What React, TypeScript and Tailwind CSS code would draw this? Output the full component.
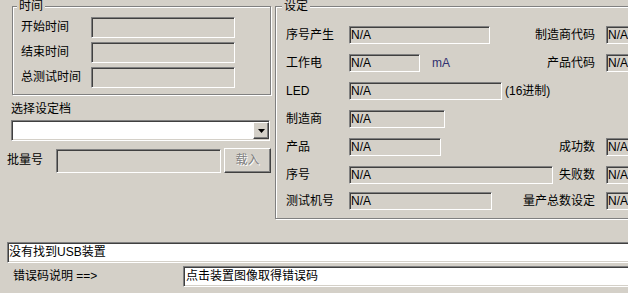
const sunken =
  'border border-t-[#808080] border-l-[#808080] border-r-white border-b-white shadow-[inset_1px_1px_0_#404040,inset_-1px_-1px_0_#d4d0c8]';
const raised =
  'border border-t-white border-l-white border-r-[#404040] border-b-[#404040] shadow-[inset_-1px_-1px_0_#808080,inset_1px_1px_0_#d4d0c8]';

function Group({ title, titleClass, className, children }: { title: string; titleClass: string; className: string; children: React.ReactNode }) {
  return (
    <div className={`relative border border-[#808080] shadow-[inset_1px_1px_0_#fff,1px_1px_0_#fff] ${className}`}>
      <span className={`absolute -top-[7px] bg-[#d4d0c8] px-[2px] leading-[13px] ${titleClass}`}>{title}</span>
      {children}
    </div>
  );
}

function Field({ className, value }: { className: string; value?: string }) {
  return (
    <div className={`${sunken} flex items-center pl-[1px] shrink-0 overflow-hidden whitespace-nowrap ${className}`}>
      {value}
    </div>
  );
}

type Row = { label: string; w: string; mt: string; suffix?: string; suffixCls?: string; right?: string };

const rows: Row[] = [
  { label: '序号产生', w: 'w-[141px]', mt: 'mt-0', right: '制造商代码' },
  { label: '工作电', w: 'w-[71px]', mt: 'mt-[10px]', suffix: 'mA', suffixCls: 'ml-[12px] text-[#303070]', right: '产品代码' },
  { label: 'LED', w: 'w-[153px]', mt: 'mt-[10px]', suffix: '(16进制)', suffixCls: 'ml-[3px]' },
  { label: '制造商', w: 'w-[96px]', mt: 'mt-[10px]' },
  { label: '产品', w: 'w-[92px]', mt: 'mt-[10px]', right: '成功数' },
  { label: '序号', w: 'w-[204px]', mt: 'mt-[10px]', right: '失败数' },
  { label: '测试机号', w: 'w-[143px]', mt: 'mt-[8px]', right: '量产总数设定' },
];

export default function App() {
  return (
    <div className="w-[628px] h-[293px] overflow-hidden bg-[#d4d0c8] text-[12px] leading-[13px] text-black font-['Liberation_Sans','Noto_Sans_CJK_SC',sans-serif]">
      <div className="flex h-[219px]">
        <div className="w-[275px] shrink-0 flex flex-col">
          <Group title="时间" titleClass="left-[4px]" className="mt-[6px] ml-[12px] w-[259px] h-[89px] pt-[10px] pl-[8px] flex flex-col gap-[4px]">
            {['开始时间', '结束时间', '总测试时间'].map((t) => (
              <div key={t} className="flex items-center">
                <span className="w-[70px]">{t}</span>
                <Field className="w-[144px] h-[21px] bg-[#d4d0c8]" />
              </div>
            ))}
          </Group>

          <span className="mt-[8px] ml-[11px]">选择设定档</span>
          <div className={`${sunken} mt-[4px] ml-[11px] w-[259px] h-[21px] bg-white flex items-center justify-end`}>
            <div className={`${raised} w-[16px] h-[17px] bg-[#d4d0c8] flex items-center justify-center`}>
              <svg width="7" height="4" viewBox="0 0 7 4">
                <polygon points="0,0 7,0 3.5,4" fill="#000" />
              </svg>
            </div>
          </div>

          <div className="mt-[7px] flex items-center">
            <span className="ml-[7px] w-[49px]">批量号</span>
            <Field className="w-[165px] h-[24px] bg-[#d4d0c8]" />
            <div className={`${raised} ml-[3px] w-[47px] h-[25px] bg-[#d4d0c8] flex items-center justify-center text-[#808080] [text-shadow:1px_1px_0_#fff]`}>
              载入
            </div>
          </div>
        </div>

        <Group title="设定" titleClass="left-[6px]" className="mt-[6px] w-[400px] h-[213px] shrink-0 pt-[19px] pl-[10px]">
          <div className="w-[380px] flex flex-col">
            {rows.map((r) => (
              <div key={r.label} className={`flex items-center h-[18px] ${r.mt}`}>
                <span className="w-[63px] shrink-0">{r.label}</span>
                <Field className={`${r.w} h-[18px] bg-[#d4d0c8]`} value="N/A" />
                {r.suffix && <span className={r.suffixCls}>{r.suffix}</span>}
                {r.right && (
                  <>
                    <span className="ml-auto">{r.right}</span>
                    <Field className="ml-[11px] w-[60px] h-[18px] bg-[#d4d0c8]" value="N/A" />
                  </>
                )}
              </div>
            ))}
          </div>
        </Group>
      </div>

      <div className={`${sunken} mt-[23px] ml-[7px] w-[640px] h-[21px] bg-white flex items-center pl-[1px]`}>
        没有找到USB装置
      </div>

      <div className="mt-[3px] flex items-center h-[21px]">
        <span className="ml-[13px] w-[170px] shrink-0">错误码说明 ==&gt;</span>
        <Field className="w-[460px] h-[21px] bg-white pl-[2px]" value="点击装置图像取得错误码" />
      </div>
    </div>
  );
}
